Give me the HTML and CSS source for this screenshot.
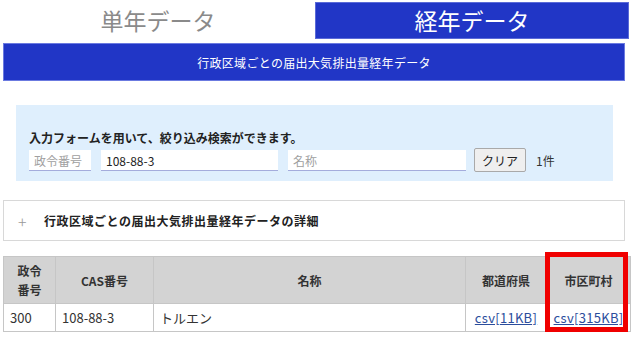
FILE: index.html
```html
<!DOCTYPE html>
<html lang="ja">
<head>
<meta charset="utf-8">
<link rel="stylesheet" href="styles.css">
</head>
<body>
<div class="page">
  <div class="tabs">
    <div class="tab tab-off">単年データ</div>
    <div class="tab tab-on">経年データ</div>
  </div>
  <div class="titlebar">行政区域ごとの届出大気排出量経年データ</div>
  <div class="panel">
    <div class="panel-lead">入力フォームを用いて、絞り込み検索ができます。</div>
    <div class="panel-row">
      <input class="field f-no" type="text" placeholder="政令番号">
      <input class="field f-cas" type="text" value="108-88-3">
      <input class="field f-name" type="text" placeholder="名称">
      <button class="btn-clear" type="button">クリア</button>
      <span class="count">1件</span>
    </div>
  </div>
  <div class="details"><span class="plus">+</span><span class="details-title">行政区域ごとの届出大気排出量経年データの詳細</span></div>
  <div class="table-wrap">
    <table class="data">
      <thead>
        <tr>
          <th class="c1">政令<br>番号</th>
          <th class="c2">CAS番号</th>
          <th class="c3">名称</th>
          <th class="c4">都道府県</th>
          <th class="c5">市区町村</th>
        </tr>
      </thead>
      <tbody>
        <tr>
          <td>300</td>
          <td>108-88-3</td>
          <td>トルエン</td>
          <td class="lnk"><a href="#">csv[11KB]</a></td>
          <td class="lnk"><a href="#">csv[315KB]</a></td>
        </tr>
      </tbody>
    </table>
    <div class="highlight"></div>
  </div>
</div>
</body>
</html>
```
FILE: styles.css
```css
html, body {
  margin: 0;
  padding: 0;
  background: #ffffff;
}
body {
  font-family: "Noto Sans CJK JP", "Noto Sans", sans-serif;
  color: #333;
}
.page {
  padding-left: 3px;
  width: 626px;
}
.tabs {
  display: flex;
  margin-top: 2px;
  height: 37px;
  gap: 2px;
}
.tab {
  display: flex;
  align-items: center;
  justify-content: center;
  font-size: 23px;
  line-height: 1;
  box-sizing: border-box;
}
.tab-off {
  width: 310px;
  color: #8a8a8a;
  background: #fff;
}
.tab-on {
  width: 314px;
  color: #fff;
  background: #2136c6;
  border: 1px solid #5a6ad8;
}
.titlebar {
  margin-top: 4px;
  width: 622px;
  height: 38px;
  box-sizing: border-box;
  background: #2136c6;
  border: 1px solid #6b7ae0;
  color: #fff;
  font-size: 12px;
  display: flex;
  align-items: center;
  justify-content: center;
  letter-spacing: 0.3px;
}
.panel {
  margin-top: 24px;
  margin-left: 13px;
  width: 597px;
  height: 76px;
  box-sizing: border-box;
  background: #dfeffd;
  padding: 25px 0 0 13px;
}
.panel-lead {
  font-size: 12px;
  font-weight: bold;
  line-height: 16px;
  color: #222;
}
.panel-row {
  display: flex;
  align-items: center;
  margin-top: 2px;
  height: 24px;
}
.field {
  box-sizing: border-box;
  height: 21px;
  border: none;
  border-bottom: 1px solid #a4acdc;
  background: #fff;
  font-family: "Noto Sans CJK JP", "Noto Sans", sans-serif;
  font-size: 12px;
  padding: 0 5px;
  color: #222;
  outline: none;
  margin-top: 1px;
}
.field::placeholder {
  color: #a0a0a0;
}
.f-no { width: 62px; }
.f-cas { width: 177px; margin-left: 10px; }
.f-name { width: 178px; margin-left: 10px; }
.btn-clear {
  margin-left: 8px;
  width: 52px;
  height: 24px;
  box-sizing: border-box;
  border: 1px solid #a9a9a9;
  border-radius: 2px;
  background: #efefef;
  font-family: "Noto Sans CJK JP", "Noto Sans", sans-serif;
  font-size: 12px;
  color: #222;
  padding: 0;
}
.count {
  margin-left: 10px;
  font-size: 12px;
  color: #333;
}
.details {
  margin-top: 19px;
  width: 622px;
  height: 41px;
  box-sizing: border-box;
  border: 1px solid #d8d8d8;
  display: flex;
  align-items: center;
  padding-left: 14px;
}
.plus {
  font-size: 16px;
  font-weight: 300;
  color: #999;
  width: 26px;
  line-height: 1;
}
.details-title {
  font-size: 12px;
  font-weight: bold;
  color: #222;
  letter-spacing: 0.5px;
}
.table-wrap {
  position: relative;
  margin-top: 15px;
  width: 622px;
}
.data {
  width: 622px;
  border-collapse: collapse;
  table-layout: fixed;
}
.data th, .data td {
  border: 1px solid #c6c6c6;
  font-size: 12px;
}
.data th {
  background: #d3d3d3;
  font-weight: bold;
  color: #333;
  height: 46px;
  line-height: 19px;
  padding: 0;
  text-align: center;
}
.data td {
  height: 27px;
  padding: 0 0 0 6px;
  font-size: 13px;
  color: #333;
  text-align: left;
}
.data td.lnk {
  padding: 0;
  text-align: center;
}
.c1 { width: 51px; }
.c2 { width: 97px; }
.c3 { width: 311px; }
.c4 { width: 80px; }
.c5 { width: 83px; }
.data a {
  color: #2b4d9c;
  text-decoration: underline;
  letter-spacing: 0.3px;
}
.highlight {
  position: absolute;
  left: 542px;
  top: -4px;
  width: 83px;
  height: 80px;
  box-sizing: border-box;
  border: 5px solid #f00000;
}
```
